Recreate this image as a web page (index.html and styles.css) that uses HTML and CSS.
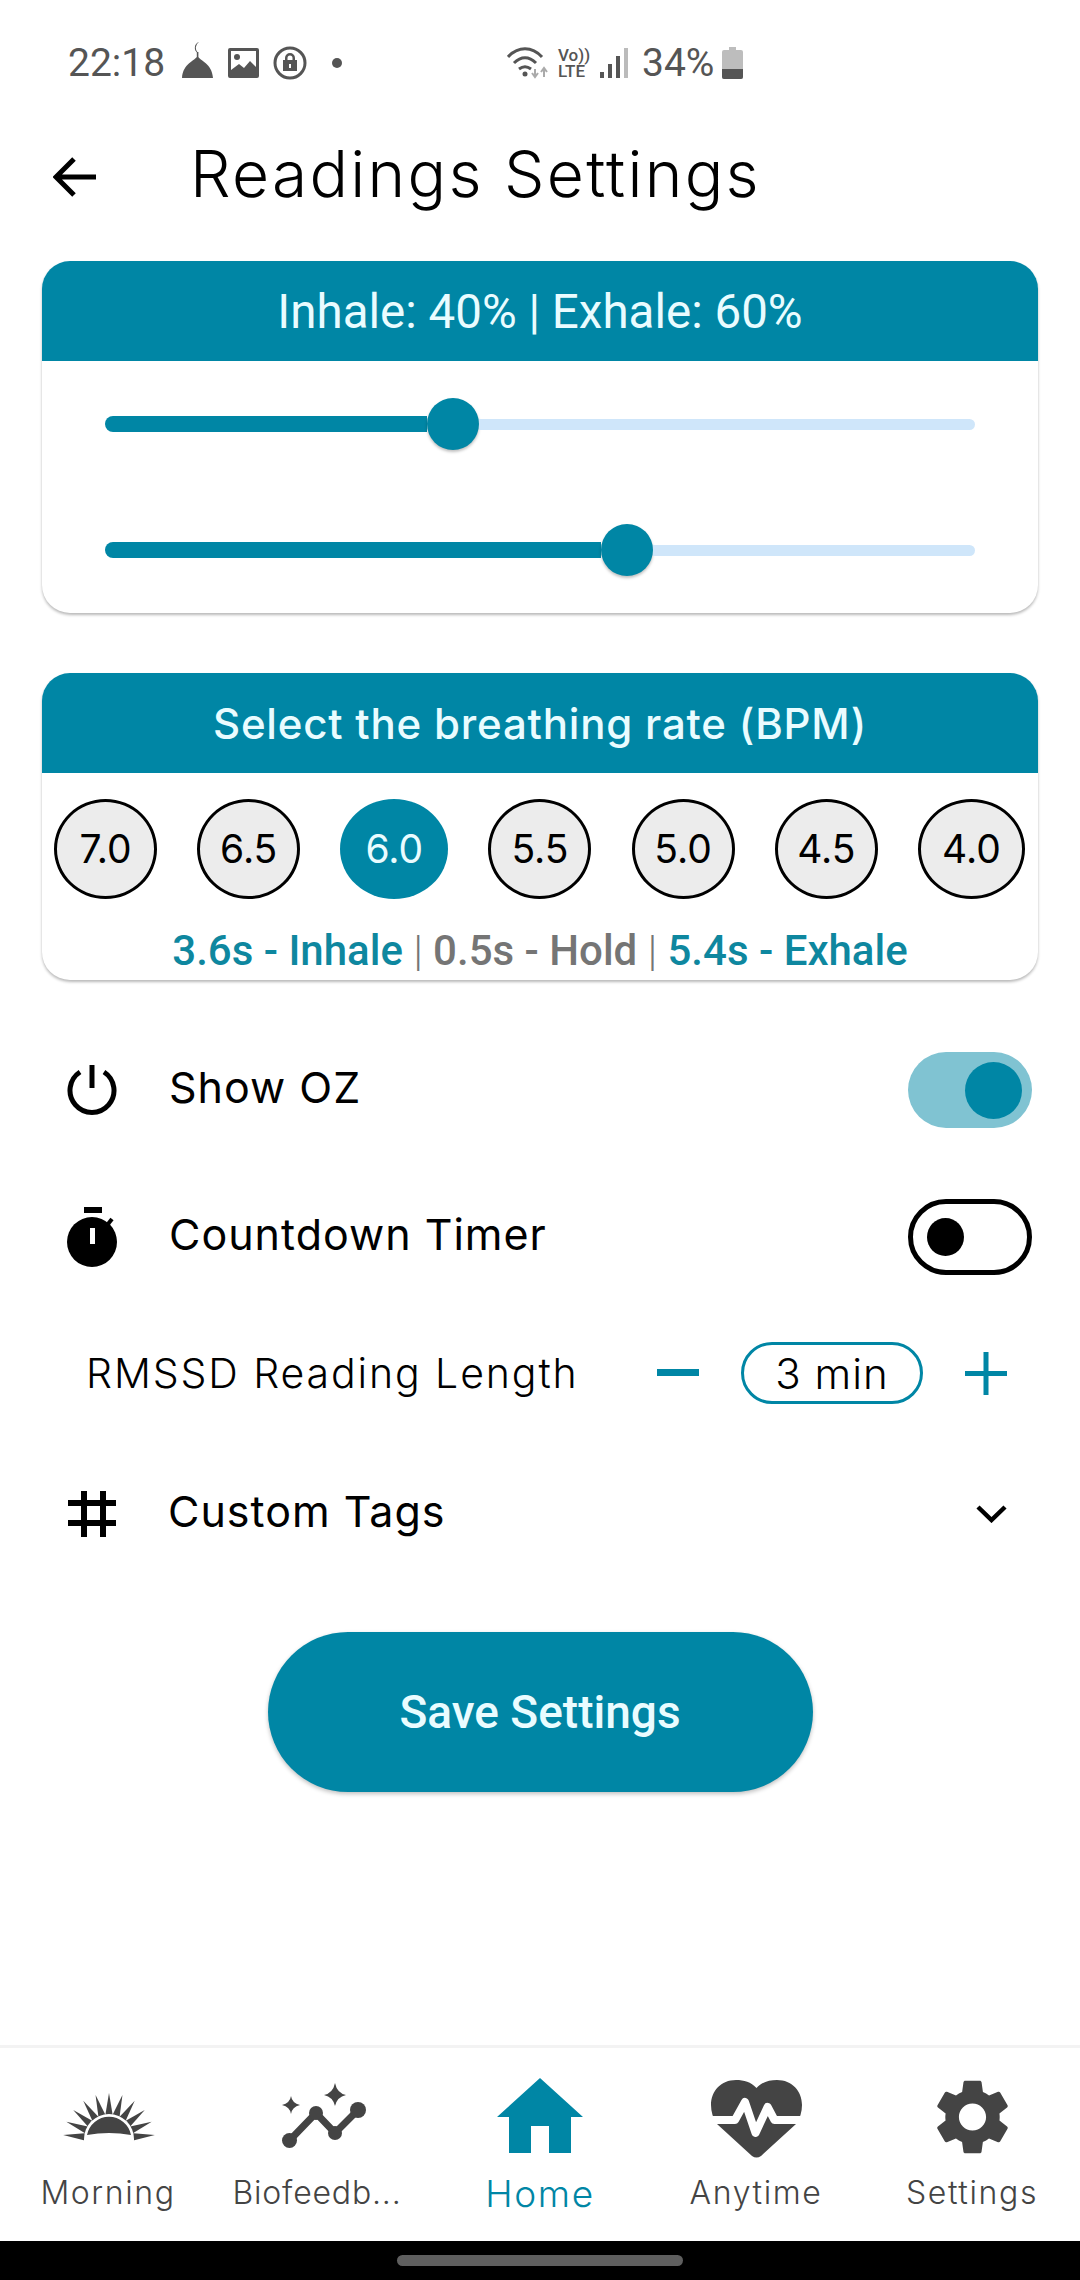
FILE: index.html
```html
<!DOCTYPE html>
<html lang="en">
<head>
  <meta charset="UTF-8">
  <meta name="viewport" content="width=device-width, initial-scale=1.0">
  <title>Readings Settings</title>
  <link rel="stylesheet" href="styles.css">
</head>
<body>
  <div class="phone">
    <div class="statusbar">
      <div class="status-left">
        <span class="clock">22:18</span>
        <svg class="st-mosque" width="31" height="36" viewBox="0 0 31 36"><path d="M17 0a6 6 0 0 0-1 11 7 7 0 0 1 1-11z" fill="#555"/><rect x="14.800" y="10" width="1.600" height="6" fill="#555"/><path d="M15.500 14C13 19 1 21 0 36h31C30 21 18 19 15.500 14z" fill="#555"/></svg>
        <svg class="st-image" width="31" height="30" viewBox="0 0 31 30"><path fill-rule="evenodd" d="M2 0h27a2 2 0 0 1 2 2v26a2 2 0 0 1-2 2H2a2 2 0 0 1-2-2V2a2 2 0 0 1 2-2zm1 3v19l8-6 5 4 6-7 6 6V3z" fill="#555"/><circle cx="9" cy="9" r="3" fill="#555"/></svg>
        <svg class="st-lock" width="34" height="34" viewBox="0 0 34 34"><circle cx="17" cy="17" r="15" fill="none" stroke="#555" stroke-width="3"/><path fill-rule="evenodd" d="M10 14h2v-2a5 5 0 0 1 10 0v2h2v11H10zm4.500 0h5v-2a2.500 2.500 0 0 0-5 0z" fill="#555"/><rect x="16" y="18" width="2" height="4" fill="#fff"/></svg>
        <span class="st-dot"></span>
      </div>
      <div class="status-right">
        <svg class="st-wifi" width="41" height="33" viewBox="0 0 41 33"><g fill="none" stroke="#555" stroke-width="3"><path d="M1 10c10-11 24-11 34 0"/><path d="M7 16c7-7 15-7 22 0"/><path d="M12 22c4-3 8-3 12 0"/></g><circle cx="18" cy="27" r="2.500" fill="#555"/><path d="M28 22v7m-3-3l3 4 3-4" fill="none" stroke="#aaa" stroke-width="2"/><path d="M37 30v-8m-3 3l3-4 3 4" fill="none" stroke="#aaa" stroke-width="2"/></svg>
        <div class="st-volte"><span>Vo))</span><span>LTE</span></div>
        <svg class="st-signal" width="28" height="30" viewBox="0 0 28 30"><rect x="0" y="24" width="4" height="6" fill="#555"/><rect x="8" y="16" width="4" height="14" fill="#555"/><rect x="16" y="8" width="4" height="22" fill="#555"/><rect x="24" y="0" width="4" height="30" fill="#bbb"/></svg>
        <span class="battery-pct">34%</span>
        <svg class="st-battery" width="21" height="32" viewBox="0 0 21 32"><path d="M7 0h7v3h5a2 2 0 0 1 2 2v25a2 2 0 0 1-2 2H2a2 2 0 0 1-2-2V5a2 2 0 0 1 2-2h5z" fill="#bdbdbd"/><path d="M0 22h21v8a2 2 0 0 1-2 2H2a2 2 0 0 1-2-2z" fill="#555"/></svg>
      </div>
    </div>

    <header class="topbar">
      <svg class="back" width="43" height="40" viewBox="0 0 43 40"><path d="M43 20H4M21 2L3 20l18 18" fill="none" stroke="#000" stroke-width="5"/></svg>
      <h1>Readings Settings</h1>
    </header>

    <main class="content">
      <section class="card ratio-card">
        <div class="card-head ratio-head">Inhale: 40% | Exhale: 60%</div>
        <div class="sliders">
          <div class="slider">
            <div class="fill fill-40"></div>
            <div class="thumb"></div>
            <div class="rest"></div>
          </div>
          <div class="slider">
            <div class="fill fill-60"></div>
            <div class="thumb"></div>
            <div class="rest"></div>
          </div>
        </div>
      </section>

      <section class="card rate-card">
        <div class="card-head rate-head">Select the breathing rate (BPM)</div>
        <div class="rates">
          <div class="rate">7.0</div>
          <div class="rate">6.5</div>
          <div class="rate selected">6.0</div>
          <div class="rate">5.5</div>
          <div class="rate">5.0</div>
          <div class="rate">4.5</div>
          <div class="rate">4.0</div>
        </div>
        <p class="timing"><span class="teal">3.6s - Inhale</span> <span class="sep">|</span> 0.5s - Hold <span class="sep">|</span> <span class="teal">5.4s - Exhale</span></p>
      </section>

      <div class="row row-oz">
        <svg class="row-icon" width="50" height="50" viewBox="0 0 50 50"><path d="M13 7a22 22 0 1 0 24 0" fill="none" stroke="#000" stroke-width="5"/><path d="M25 0v23" stroke="#000" stroke-width="5"/></svg>
        <span class="row-label">Show OZ</span>
        <div class="toggle on"><div class="knob"></div></div>
      </div>

      <div class="row row-timer">
        <svg class="row-icon" width="50" height="60" viewBox="0 0 50 60"><rect x="17" y="0" width="18" height="6" fill="#000"/><circle cx="25" cy="35" r="25" fill="#000"/><path d="M41 17l4-5" stroke="#000" stroke-width="4"/><rect x="23" y="21" width="5" height="16" fill="#fff"/></svg>
        <span class="row-label">Countdown Timer</span>
        <div class="toggle off"><div class="knob"></div></div>
      </div>

      <div class="row row-length">
        <span class="length-label">RMSSD Reading Length</span>
        <div class="stepper">
          <svg width="42" height="8" viewBox="0 0 42 8"><rect width="42" height="7" y="0" fill="#0086a5"/></svg>
          <div class="pill">3 min</div>
          <svg width="42" height="43" viewBox="0 0 42 43"><path d="M0 21.500h42M21 0v43" stroke="#0086a5" stroke-width="5"/></svg>
        </div>
      </div>

      <div class="row row-tags">
        <svg class="row-icon" width="49" height="46" viewBox="0 0 49 46"><path d="M17 0v46M36 0v46M1 12h48M1 32h48" stroke="#000" stroke-width="6"/></svg>
        <span class="row-label">Custom Tags</span>
        <svg class="chevron" width="31" height="18" viewBox="0 0 31 18"><path d="M2 2l13.500 13L29 2" fill="none" stroke="#000" stroke-width="4.500"/></svg>
      </div>

      <button class="save">Save Settings</button>
    </main>

    <nav class="tabs">
      <a class="tab">
        <span class="tab-icon">
          <svg width="93" height="49" viewBox="0 0 93 49">
            <defs><polygon id="ray" points="43,24 47,0 51,24"/></defs>
            <g fill="#444">
              <use href="#ray" transform="rotate(-85 47 46)"/>
              <use href="#ray" transform="rotate(-68 47 46)"/>
              <use href="#ray" transform="rotate(-51 47 46)"/>
              <use href="#ray" transform="rotate(-34 47 46)"/>
              <use href="#ray" transform="rotate(-17 47 46)"/>
              <use href="#ray"/>
              <use href="#ray" transform="rotate(17 47 46)"/>
              <use href="#ray" transform="rotate(34 47 46)"/>
              <use href="#ray" transform="rotate(51 47 46)"/>
              <use href="#ray" transform="rotate(68 47 46)"/>
              <use href="#ray" transform="rotate(85 47 46)"/>
            </g>
            <circle cx="47" cy="46" r="25" fill="#fff"/>
            <path d="M25 42A22.400 22.400 0 0 1 69 42Q47 38 25 42z" fill="#444"/>
          </svg>
        </span>
        <span class="tab-label">Morning</span>
      </a>
      <a class="tab tab-bio">
        <span class="tab-icon">
          <svg width="84" height="65" viewBox="0 0 84 65">
            <path d="M7.500 57.500L34 30l19 20 23-23" fill="none" stroke="#444" stroke-width="7"/>
            <circle cx="7.500" cy="57.500" r="7.500" fill="#444"/>
            <circle cx="34" cy="30" r="7" fill="#444"/>
            <circle cx="53" cy="50" r="7" fill="#444"/>
            <circle cx="76" cy="27" r="8" fill="#444"/>
            <path d="M53 0Q55 10 64 12 55 14 53 23 51 14 42 12 51 10 53 0z" fill="#444"/>
            <path d="M9 13Q10 20 18 22 10 24 9 31 8 24 0 22 8 20 9 13z" fill="#444"/>
          </svg>
        </span>
        <span class="tab-label">Biofeedb...</span>
      </a>
      <a class="tab active">
        <span class="tab-icon">
          <svg width="86" height="75" viewBox="0 0 86 75"><path fill-rule="evenodd" d="M43 0l43 39H74v36H52V48H34v27H12V39H0z" fill="#0086a5"/></svg>
        </span>
        <span class="tab-label">Home</span>
      </a>
      <a class="tab tab-heart">
        <span class="tab-icon">
          <svg width="91" height="78" viewBox="0 0 91 78">
            <path d="M45.500 8C40 2 33 0 25 0 10 0 0 11 0 25c0 7 2 13 6 19l35 32q4.500 3 9 0l35-32c4-6 6-12 6-19C91 11 81 0 66 0 58 0 51 2 45.500 8z" fill="#444"/>
            <path d="M-2 40H24L34 22 44.500 53 56.600 27 63.500 40H93" fill="none" stroke="#fff" stroke-width="8" stroke-linejoin="round"/>
          </svg>
        </span>
        <span class="tab-label">Anytime</span>
      </a>
      <a class="tab">
        <span class="tab-icon">
          <svg width="71" height="76" viewBox="2.600 2 18.800 20"><path d="M19.140 12.940c.04-.3.06-.61.06-.94 0-.32-.02-.64-.07-.94l2.030-1.580c.18-.14.23-.41.12-.61l-1.920-3.320c-.12-.22-.37-.29-.59-.22l-2.390.96c-.5-.38-1.030-.7-1.620-.94l-.36-2.540c-.04-.24-.24-.41-.48-.41h-3.840c-.24 0-.43.17-.47.41l-.36 2.540c-.59.24-1.130.57-1.620.94l-2.390-.96c-.22-.08-.47 0-.59.22L2.740 8.870c-.12.21-.08.47.12.61l2.030 1.580c-.05.3-.09.63-.09.94s.02.64.07.94l-2.030 1.580c-.18.14-.23.41-.12.61l1.920 3.320c.12.22.37.29.59.22l2.390-.96c.5.38 1.030.7 1.620.94l.36 2.540c.05.24.24.41.48.41h3.840c.24 0 .44-.17.47-.41l.36-2.540c.59-.24 1.130-.56 1.620-.94l2.390.96c.22.08.47 0 .59-.22l1.920-3.320c.12-.22.07-.47-.12-.61l-2.010-1.580zM12 15.600c-1.980 0-3.600-1.620-3.600-3.600s1.620-3.600 3.600-3.600 3.600 1.620 3.600 3.600-1.620 3.600-3.600 3.600z" fill="#444"/></svg>
        </span>
        <span class="tab-label">Settings</span>
      </a>
    </nav>

    <div class="navbar"><div class="handle"></div></div>
  </div>
</body>
</html>
```

FILE: styles.css
```css
* {
  box-sizing: border-box;
}
body {
  margin: 0;
  font-family: Inter, "Open Sans", sans-serif;
  background-color: #ffffff;
  color: #000000;
}
.phone {
  width: 1080px;
  height: 2280px;
  display: flex;
  flex-direction: column;
  overflow: hidden;
}

/* status bar */
.statusbar {
  height: 126px;
  display: flex;
  align-items: center;
  color: #555555;
  font-family: Roboto, sans-serif;
  font-size: 39px;
}
.status-left {
  width: 507px;
  padding-left: 68px;
  display: flex;
  align-items: center;
}
.status-right {
  display: flex;
  align-items: center;
}
.st-mosque {
  margin-left: 17px;
  margin-top: -6px;
}
.st-image {
  margin-left: 15px;
}
.st-lock {
  margin-left: 14px;
}
.st-dot {
  width: 10px;
  height: 10px;
  margin-left: 25px;
  border-radius: 50%;
  background-color: #555555;
}
.st-volte {
  margin-left: 10px;
  display: flex;
  flex-direction: column;
  font-size: 17px;
  font-weight: 500;
  line-height: 16px;
  width: 30px;
}
.st-signal {
  margin-left: 12px;
}
.battery-pct {
  margin-left: 14px;
}
.st-battery {
  margin-left: 8px;
}

/* title */
.topbar {
  height: 102px;
  padding-left: 53px;
  display: flex;
  align-items: center;
}
.topbar h1 {
  margin: -6px 0 0 94px;
  font-size: 64px;
  font-weight: 300;
  letter-spacing: 2.3px;
  line-height: 1;
}

.content {
  flex: 1;
  display: flex;
  flex-direction: column;
  padding: 33px 42px 0;
}

/* cards */
.card {
  background-color: #ffffff;
  border-radius: 28px;
  box-shadow: 0 2px 3px rgba(0, 0, 0, 0.28);
  overflow: hidden;
}
.card-head {
  height: 100px;
  display: flex;
  align-items: center;
  justify-content: center;
  background-color: #0086a5;
  color: #e9fcff;
}
.ratio-card {
  height: 352px;
}
.ratio-head {
  padding-top: 2px;
  font-family: Roboto, sans-serif;
  font-size: 47.5px;
}
.sliders {
  padding: 37px 63px 0 63px;
}
.slider {
  height: 52px;
  display: flex;
  align-items: center;
}
.slider + .slider {
  margin-top: 74px;
}
.fill {
  height: 16px;
  background-color: #0086a5;
  border-radius: 8px 0 0 8px;
}
.fill-40 {
  width: 322px;
}
.fill-60 {
  width: 496px;
}
.thumb {
  width: 52px;
  height: 52px;
  flex: none;
  border-radius: 50%;
  background-color: #0086a5;
  box-shadow: 0 2px 3px rgba(0, 0, 0, 0.25);
}
.rest {
  flex: 1;
  height: 11px;
  background-color: #cfe6fa;
  border-radius: 0 6px 6px 0;
}
.rate-card {
  height: 307px;
  margin-top: 60px;
}
.rate-head {
  font-size: 42px;
  font-weight: 500;
  letter-spacing: 0.8px;
}
.rates {
  margin: 26px 13px 0 12px;
  display: flex;
  align-items: center;
  justify-content: space-between;
}
.rate {
  width: 103px;
  height: 100px;
  padding-bottom: 2px;
  display: flex;
  align-items: center;
  justify-content: center;
  border: 3px solid #000000;
  border-radius: 50%;
  background-color: #ececec;
  font-size: 39px;
}
.rate:last-child {
  width: 107px;
}
.rate.selected {
  width: 108px;
  border: none;
  background-color: #0086a5;
  color: #e9fcff;
}
.timing {
  margin: 28px 0 0;
  text-align: center;
  font-family: Roboto, sans-serif;
  font-size: 42px;
  font-weight: 500;
  line-height: 48px;
  color: #757575;
}
.teal {
  color: #0e879f;
}
.sep {
  font-weight: 300;
}

/* settings rows */
.row {
  display: flex;
  align-items: center;
  padding-left: 25px;
}
.row-icon {
  flex: none;
}
.row-label {
  font-size: 43px;
  font-weight: 400;
  letter-spacing: 1px;
  line-height: 40px;
  margin: 0 0 6px 52px;
}
.toggle {
  width: 124px;
  height: 76px;
  margin-left: auto;
  margin-right: 6px;
  display: flex;
  align-items: center;
  border-radius: 38px;
}
.toggle.on {
  justify-content: flex-end;
  padding-right: 10px;
  background-color: #80c3d2;
}
.toggle.on .knob {
  width: 57px;
  height: 57px;
  border-radius: 50%;
  background-color: #0086a5;
}
.toggle.off {
  padding-left: 14px;
  border: 5px solid #000000;
}
.toggle.off .knob {
  width: 37px;
  height: 38px;
  border-radius: 50%;
  background-color: #000000;
}
.row-oz {
  margin-top: 72px;
}
.row-timer {
  margin-top: 71px;
}
.row-length {
  margin-top: 67px;
  padding-left: 44px;
}
.length-label {
  font-size: 41px;
  font-weight: 300;
  letter-spacing: 1.9px;
}
.stepper {
  margin-left: auto;
  margin-right: 31px;
  display: flex;
  align-items: center;
  gap: 42px;
}
.pill {
  width: 182px;
  height: 62px;
  display: flex;
  align-items: center;
  justify-content: center;
  border: 3px solid #0086a5;
  border-radius: 31px;
  font-size: 42px;
  font-weight: 300;
  letter-spacing: 1px;
}
.row-tags {
  margin-top: 87px;
}
.chevron {
  margin-left: auto;
  margin-right: 31px;
}
.save {
  width: 545px;
  height: 160px;
  margin: 95px auto 0;
  border: none;
  border-radius: 80px;
  background-color: #0086a5;
  color: #e9fcff;
  font-family: Roboto, sans-serif;
  font-size: 46px;
  font-weight: 500;
  box-shadow: 0 2px 4px rgba(0, 0, 0, 0.25);
}

/* bottom tabs */
.tabs {
  height: 196px;
  display: flex;
  border-top: 3px solid #f3f3f3;
}
.tab {
  width: 216px;
  display: flex;
  flex-direction: column;
  align-items: center;
  color: #444444;
}
.tab-icon {
  height: 78px;
  margin-top: 30px;
  display: flex;
  align-items: center;
  justify-content: center;
}
.tab-bio .tab-icon svg {
  margin-bottom: 4px;
}
.tab.active .tab-icon svg {
  margin-bottom: 4px;
}
.tab-heart .tab-icon svg {
  margin-top: 4px;
}
.tab-label {
  margin-top: 17px;
  font-size: 32px;
  font-weight: 300;
  letter-spacing: 1.6px;
  white-space: nowrap;
}
.tab-bio .tab-label {
  margin-left: -14px;
  letter-spacing: 0.8px;
}
.tab.active {
  color: #0086a5;
}
.tab.active .tab-label {
  font-size: 37px;
  margin-top: 15px;
}
.navbar {
  height: 39px;
  background-color: #000000;
  display: flex;
  justify-content: center;
  padding-top: 14px;
}
.handle {
  width: 286px;
  height: 11px;
  border-radius: 6px;
  background-color: #5f5f5f;
}
```
